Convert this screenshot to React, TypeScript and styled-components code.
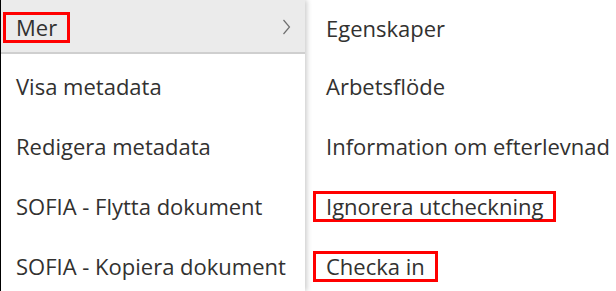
import styled, {createGlobalStyle} from "styled-components";

const GlobalStyle = createGlobalStyle`
    html, body {
        margin: 0;
        padding: 0;
        background: #ffffff;
    }
`;

const Screen = styled.div`
    display: flex;
    width: 616px;
    height: 291px;
    overflow: hidden;
    font-family: "Segoe UI", "Open Sans", "Noto Sans", sans-serif;
    font-size: 22px;
    color: #323130;
`;

const MainMenu = styled.ul`
    list-style: none;
    margin: 0;
    padding: 0;
    width: 304px;
    flex-shrink: 0;
    border-left: 1px solid #000000;
    box-shadow: 2px 0 5px rgba(0, 0, 0, 0.2);
    position: relative;
    z-index: 1;
    background: #ffffff;
`;

const SubMenu = styled.ul`
    list-style: none;
    margin: 0;
    padding: 0 0 0 21px;
    flex: 1;
`;

const Item = styled.li<{$active?: boolean; $first?: boolean}>`
    display: flex;
    align-items: center;
    justify-content: space-between;
    box-sizing: border-box;
    height: ${(p) => (p.$first ? "54px" : "60px")};
    padding: ${(p) => (p.$first ? "2px" : "4px")} 14px 0 15px;
    background: ${(p) => (p.$active ? "#ebebeb" : "transparent")};
    border-bottom: ${(p) => (p.$active ? "2px solid #cfcfcf" : "none")};
    white-space: nowrap;
`;

const SubItem = styled.li<{$first?: boolean}>`
    display: flex;
    align-items: center;
    box-sizing: border-box;
    height: ${(p) => (p.$first ? "54px" : "60px")};
    padding-top: ${(p) => (p.$first ? "2px" : "4px")};
    white-space: nowrap;
`;

const Label = styled.span<{$marked?: boolean}>`
    display: inline-block;
    padding: 0 10px;
    margin-left: -13px;
    line-height: 25px;
    border: 3px solid ${(p) => (p.$marked ? "#ff0000" : "transparent")};
`;

const Chevron = () => (
    <svg width="9" height="16" viewBox="0 0 9 16" fill="none">
        <path d="M1.5 1 L7.5 8 L1.5 15" stroke="#6f6f6f" strokeWidth="1.2" />
    </svg>
);

export default function App() {
    return (
        <>
            <GlobalStyle />
            <Screen>
                <MainMenu>
                    <Item $active $first>
                        <Label $marked>Mer</Label>
                        <Chevron />
                    </Item>
                    <Item>
                        <Label>Visa metadata</Label>
                    </Item>
                    <Item>
                        <Label>Redigera metadata</Label>
                    </Item>
                    <Item>
                        <Label>SOFIA - Flytta dokument</Label>
                    </Item>
                    <Item>
                        <Label>SOFIA - Kopiera dokument</Label>
                    </Item>
                </MainMenu>
                <SubMenu>
                    <SubItem $first>
                        <Label>Egenskaper</Label>
                    </SubItem>
                    <SubItem>
                        <Label>Arbetsflöde</Label>
                    </SubItem>
                    <SubItem>
                        <Label>Information om efterlevnad</Label>
                    </SubItem>
                    <SubItem>
                        <Label $marked>Ignorera utcheckning</Label>
                    </SubItem>
                    <SubItem>
                        <Label $marked>Checka in</Label>
                    </SubItem>
                </SubMenu>
            </Screen>
        </>
    );
}
